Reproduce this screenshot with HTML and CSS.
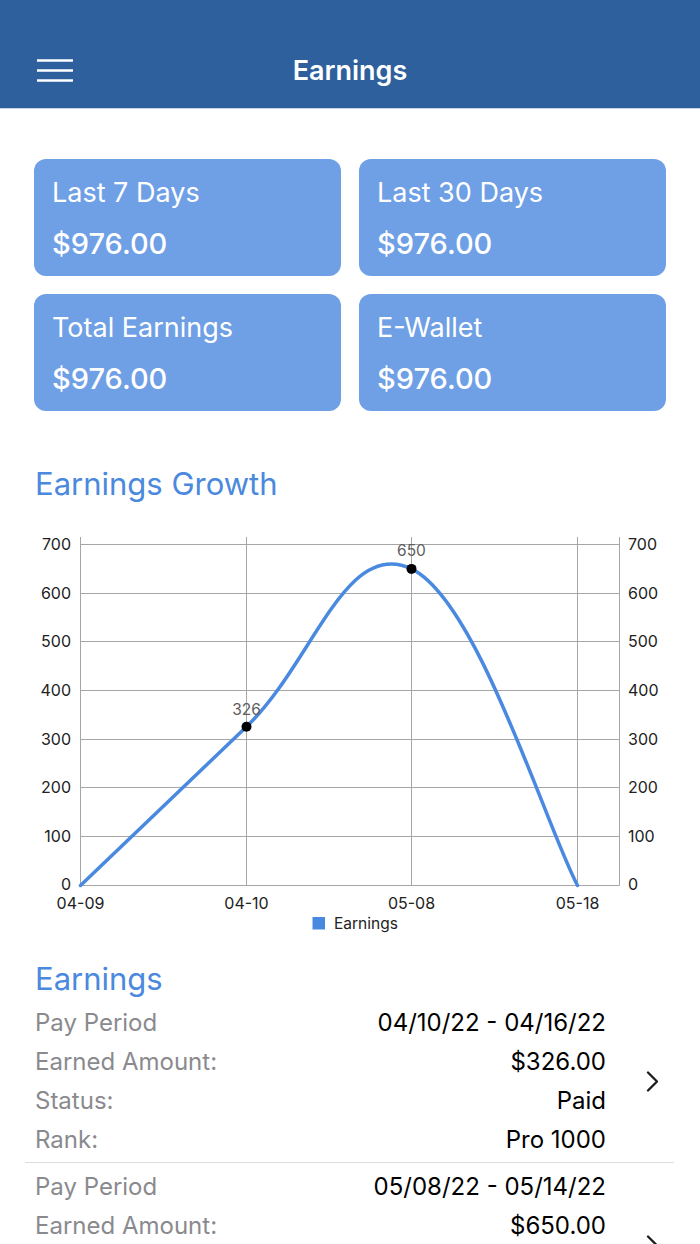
FILE: index.html
```html
<!DOCTYPE html>
<html lang="en">
<head>
<meta charset="utf-8">
<title>Earnings</title>
<link rel="stylesheet" href="styles.css">
</head>
<body>
<div class="screen">
  <header class="topbar">
    <div class="topbar-left">
      <svg class="menu-icon" width="36" height="24" viewBox="0 0 36 24" aria-hidden="true">
        <line x1="0" y1="1.5" x2="36" y2="1.5"/>
        <line x1="0" y1="11.5" x2="36" y2="11.5"/>
        <line x1="0" y1="21.5" x2="36" y2="21.5"/>
      </svg>
    </div>
    <h1 class="topbar-title">Earnings</h1>
    <div class="topbar-right"></div>
  </header>

  <section class="cards">
    <div class="card"><div class="card-label">Last 7 Days</div><div class="card-value">$976.00</div></div>
    <div class="card"><div class="card-label">Last 30 Days</div><div class="card-value">$976.00</div></div>
    <div class="card"><div class="card-label">Total Earnings</div><div class="card-value">$976.00</div></div>
    <div class="card"><div class="card-label">E-Wallet</div><div class="card-value">$976.00</div></div>
  </section>

  <h2 class="section-title growth-title">Earnings Growth</h2>

  <svg class="chart" width="700" height="455" viewBox="0 504 700 455">
    <g class="grid">
      <line x1="80.5" y1="544.5" x2="619.5" y2="544.5"/>
      <line x1="80.5" y1="593.5" x2="619.5" y2="593.5"/>
      <line x1="80.5" y1="641.5" x2="619.5" y2="641.5"/>
      <line x1="80.5" y1="690.5" x2="619.5" y2="690.5"/>
      <line x1="80.5" y1="739.5" x2="619.5" y2="739.5"/>
      <line x1="80.5" y1="787.5" x2="619.5" y2="787.5"/>
      <line x1="80.5" y1="836.5" x2="619.5" y2="836.5"/>
      <line x1="80.5" y1="885.5" x2="619.5" y2="885.5"/>
      <line x1="80.5" y1="537" x2="80.5" y2="885.5"/>
      <line x1="246.5" y1="537" x2="246.5" y2="885.5"/>
      <line x1="411.5" y1="537" x2="411.5" y2="885.5"/>
      <line x1="577.5" y1="537" x2="577.5" y2="885.5"/>
      <line x1="619.5" y1="537" x2="619.5" y2="885.5"/>
    </g>
    <g class="axis-left">
      <text x="71" y="550">700</text>
      <text x="71" y="599">600</text>
      <text x="71" y="647">500</text>
      <text x="71" y="696">400</text>
      <text x="71" y="745">300</text>
      <text x="71" y="793">200</text>
      <text x="71" y="842">100</text>
      <text x="71" y="889.5">0</text>
    </g>
    <g class="axis-right">
      <text x="628" y="550">700</text>
      <text x="628" y="599">600</text>
      <text x="628" y="647">500</text>
      <text x="628" y="696">400</text>
      <text x="628" y="745">300</text>
      <text x="628" y="793">200</text>
      <text x="628" y="842">100</text>
      <text x="628" y="889.5">0</text>
    </g>
    <g class="axis-bottom">
      <text x="80.5" y="909">04-09</text>
      <text x="246.5" y="909">04-10</text>
      <text x="411.5" y="909">05-08</text>
      <text x="577.5" y="909">05-18</text>
    </g>
    <path class="series" d="M80.5 885.5 C113.7 853.7 180.3 790 246.5 726.7 C312.7 663.4 345.3 537.1 411.5 568.9 C477.7 600.7 544.3 822.2 577.5 885.5"/>
    <circle class="dot" cx="246.5" cy="726.7" r="5"/>
    <circle class="dot" cx="411.5" cy="568.9" r="5"/>
    <text class="value-label" x="246.5" y="715">326</text>
    <text class="value-label" x="411.5" y="556">650</text>
    <rect class="legend-swatch" x="312.5" y="917" width="12.5" height="12.5"/>
    <text class="legend-text" x="334" y="928.5">Earnings</text>
  </svg>

  <h2 class="section-title list-title">Earnings</h2>

  <div class="earnings-list">
    <div class="item">
      <dl class="item-fields">
        <dt>Pay Period</dt><dd>04/10/22 - 04/16/22</dd>
        <dt>Earned Amount:</dt><dd>$326.00</dd>
        <dt>Status:</dt><dd>Paid</dd>
        <dt>Rank:</dt><dd>Pro 1000</dd>
      </dl>
      <div class="item-chevron">
        <svg width="13" height="21" viewBox="0 0 13 21" aria-hidden="true"><path d="M2 1.5 L11 10.5 L2 19.5"/></svg>
      </div>
    </div>
    <div class="item">
      <dl class="item-fields">
        <dt>Pay Period</dt><dd>05/08/22 - 05/14/22</dd>
        <dt>Earned Amount:</dt><dd>$650.00</dd>
        <dt>Status:</dt><dd>Paid</dd>
        <dt>Rank:</dt><dd>Pro 1000</dd>
      </dl>
      <div class="item-chevron">
        <svg width="13" height="21" viewBox="0 0 13 21" aria-hidden="true"><path d="M2 1.5 L11 10.5 L2 19.5"/></svg>
      </div>
    </div>
  </div>
</div>
</body>
</html>
```

FILE: styles.css
```css
* { box-sizing: border-box; }

html, body {
  margin: 0;
  padding: 0;
  background: #ffffff;
}

body {
  font-family: Inter, "Noto Sans", "Liberation Sans", sans-serif;
  color: #000;
}

.screen {
  width: 700px;
  height: 1244px;
  overflow: hidden;
}

/* Top bar */
.topbar {
  height: 109px;
  background: #2d609c;
  border-bottom: 1px solid #c9d5e4;
  padding-top: 44px;
  display: grid;
  grid-template-columns: 1fr auto 1fr;
  grid-template-rows: 54px;
  align-items: center;
}

.topbar-left {
  padding-left: 37px;
  display: flex;
  align-items: center;
}

.menu-icon line {
  stroke: #ffffff;
  stroke-width: 2.6;
}

.topbar-title {
  margin: 0;
  color: #ffffff;
  font-size: 27px;
  font-weight: 600;
  line-height: 54px;
}

/* Summary cards */
.cards {
  display: grid;
  grid-template-columns: 1fr 1fr;
  gap: 18px;
  padding: 0 34px;
  margin-top: 50px;
}

.card {
  height: 117px;
  background: #6fa0e5;
  border-radius: 12px;
  padding: 18px 18px 0;
  color: #ffffff;
  display: flex;
  flex-direction: column;
  gap: 17px;
}

.card-label {
  font-size: 27px;
  line-height: 32px;
  font-weight: 400;
}

.card-value {
  font-size: 29px;
  line-height: 36px;
  font-weight: 500;
}

/* Section titles */
.section-title {
  margin: 0;
  padding-left: 35px;
  color: #4a89dd;
  font-size: 31px;
  font-weight: 400;
  line-height: 40px;
}

.growth-title {
  margin-top: 53px;
}

/* Chart */
.chart {
  display: block;
}

.chart .grid line {
  stroke: #a6a6a6;
  stroke-width: 1;
}

.chart text {
  font-family: Inter, "Liberation Sans", sans-serif;
  font-size: 16px;
  fill: #222222;
}

.axis-left text { text-anchor: end; }
.axis-right text { text-anchor: start; }
.axis-bottom text { text-anchor: middle; }

.chart .series {
  fill: none;
  stroke: #4a89e0;
  stroke-width: 3.5;
  stroke-linecap: round;
}

.chart .dot { fill: #000000; }

.chart .value-label {
  text-anchor: middle;
  fill: #5e5e5e;
  font-size: 15.5px;
}

.legend-swatch { fill: #4a89e0; }

.chart .legend-text { font-size: 15.5px; }

/* Earnings list */
.earnings-list {
  margin: 0 26px 0 25px;
}

.item {
  display: flex;
  align-items: center;
  padding: 4px 0 3px;
  border-bottom: 1px solid #dedede;
}

.item-fields {
  flex: 1;
  margin: 0;
  padding-left: 10px;
  display: grid;
  grid-template-columns: 1fr auto;
  font-size: 24px;
  line-height: 39px;
}

.item-fields dt {
  color: #8a8a8e;
}

.item-fields dd {
  margin: 0;
  color: #000000;
  text-align: right;
}

.item-chevron {
  width: 68px;
  display: flex;
  justify-content: flex-start;
  padding-left: 40px;
}

.item-chevron path {
  fill: none;
  stroke: #1c1c1e;
  stroke-width: 2.3;
  stroke-linecap: round;
  stroke-linejoin: round;
}
```
